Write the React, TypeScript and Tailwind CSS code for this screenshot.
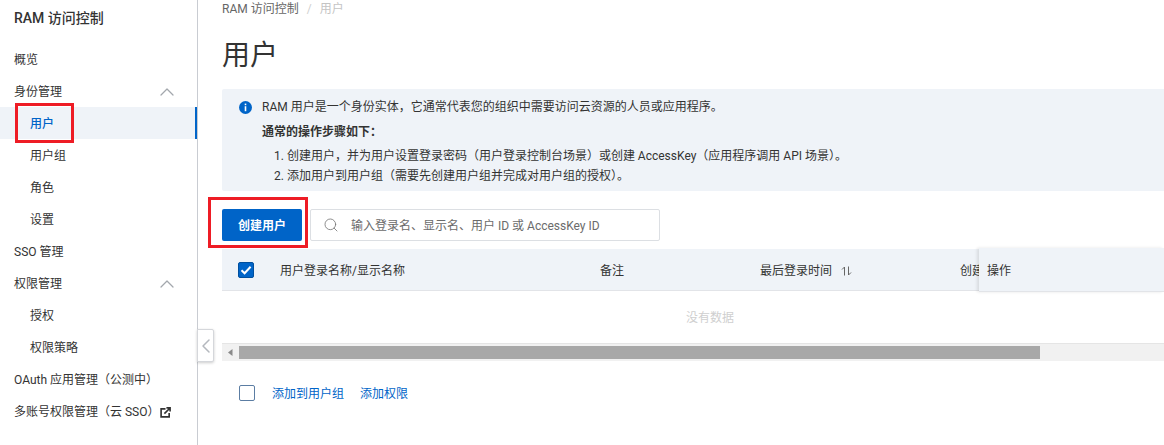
import { ChevronLeft, ChevronUp, Search } from 'lucide-react';

const FONT = "font-['Roboto','Noto_Sans_CJK_SC',sans-serif]";

const navItems = [
  { label: '概览' },
  { label: '身份管理', expandable: true },
  { label: '用户', sub: true, active: true },
  { label: '用户组', sub: true },
  { label: '角色', sub: true },
  { label: '设置', sub: true },
  { label: 'SSO 管理' },
  { label: '权限管理', expandable: true },
  { label: '授权', sub: true },
  { label: '权限策略', sub: true },
  { label: 'OAuth 应用管理（公测中）' },
  { label: '多账号权限管理（云 SSO）', external: true },
];

function ExternalIcon() {
  return (
    <svg width="11" height="11" viewBox="0 0 12 12" className="ml-[1px] text-[#333]" fill="none" stroke="currentColor">
      <path d="M6 2H1.2v8.8H10V6.5" strokeWidth="1.8" />
      <path d="M4.8 7.2 10.4 1.6M7 1h4v4" strokeWidth="1.8" />
    </svg>
  );
}

function Sidebar() {
  return (
    <aside className="relative w-[198px] h-full shrink-0 border-r border-[#c9ccd2] bg-white">
      <div className="h-[43px] pt-[8px] pl-[14px] text-[14px] leading-[20px] font-medium text-[#333]">RAM 访问控制</div>
      <nav>
        {navItems.map((item) => (
          <div
            key={item.label}
            className={`flex items-center h-[32px] pt-[2px] text-[12px] ${item.sub ? 'pl-[30px]' : 'pl-[14px]'} ${
              item.active ? 'bg-[#eff3f8] text-[#0064c8] font-medium border-r-2 border-[#0064c8]' : 'text-[#333]'
            }`}
          >
            <span>{item.label}</span>
            {item.external && <ExternalIcon />}
            {item.expandable && <ChevronUp className="ml-auto mr-[18px] w-[24px] h-[24px] text-[#a3a7ad]" strokeWidth={1.25} />}
          </div>
        ))}
      </nav>
      <button className="absolute left-[197px] top-[329px] w-[17px] h-[33px] flex items-center justify-center bg-white border border-[#d5d7db] rounded-r-[2px] shadow-[0_1px_3px_rgba(0,0,0,0.2)]">
        <ChevronLeft className="shrink-0 w-[24px] h-[24px] text-[#b4b8be]" strokeWidth={1.5} />
      </button>
    </aside>
  );
}

function InfoIcon() {
  return (
    <svg width="13" height="13" viewBox="0 0 13 13" className="shrink-0 mt-[4px]">
      <circle cx="6.5" cy="6.5" r="6.5" fill="#0064c8" />
      <rect x="5.7" y="2.6" width="1.6" height="1.6" fill="#fff" />
      <rect x="5.7" y="5.2" width="1.6" height="5" fill="#fff" />
    </svg>
  );
}

function SortIcon() {
  return (
    <svg width="11" height="10" viewBox="0 0 11 10" className="ml-[9px] text-[#666]" fill="none" stroke="currentColor">
      <path d="M3.5 9.5V1L1 3.5M7.5 0.5V9L10 6.5" strokeWidth="1" />
    </svg>
  );
}

function Checkbox({ checked }: { checked?: boolean }) {
  if (checked) {
    return (
      <span className="flex w-[16px] h-[16px] items-center justify-center rounded-[2px] bg-[#0064c8] border border-[#004f9e]">
        <svg width="12" height="12" viewBox="0 0 12 12" fill="none" stroke="#fff" strokeWidth="2">
          <path d="M1.5 6.2 4.6 9.2 10.6 2.8" />
        </svg>
      </span>
    );
  }
  return <span className="block w-[16px] h-[16px] rounded-[2px] bg-white border border-[#5b7da3]" />;
}

function InfoBox() {
  return (
    <div className="flex h-[102px] mt-[15px] pt-[8px] pl-[17px] bg-[#eff3f8] rounded-l-[2px] text-[12px] text-[#333]">
      <InfoIcon />
      <div className="ml-[10px]">
        <p className="leading-[20px]">RAM 用户是一个身份实体，它通常代表您的组织中需要访问云资源的人员或应用程序。</p>
        <p className="leading-[20px] mt-[5px] font-bold">通常的操作步骤如下：</p>
        <ol className="mt-[4px] pl-[12px]">
          <li className="leading-[20px]">1. 创建用户，并为用户设置登录密码（用户登录控制台场景）或创建 AccessKey（应用程序调用 API 场景）。</li>
          <li className="leading-[20px]">2. 添加用户到用户组（需要先创建用户组并完成对用户组的授权）。</li>
        </ol>
      </div>
    </div>
  );
}

function Toolbar() {
  return (
    <div className="flex items-center gap-[8px] mt-[18px]">
      <button className="w-[80px] h-[32px] pt-[2px] rounded-[2px] bg-[#0064c8] text-white text-[12px] font-bold">创建用户</button>
      <div className="flex items-center w-[350px] h-[32px] pl-[12px] bg-white border border-[#dcdfe3] rounded-[2px]">
        <Search className="w-[16px] h-[16px] text-[#777]" strokeWidth={1.25} />
        <span className="ml-[12px] pt-[2px] text-[12px] text-[#6b6b6b]">输入登录名、显示名、用户 ID 或 AccessKey ID</span>
      </div>
    </div>
  );
}

function UserTable() {
  return (
    <div className="relative mt-[8px]">
      <div className="flex items-center h-[42px] bg-[#eff3f8] border-b border-[#e2e4e8] text-[12px] text-[#333] whitespace-nowrap overflow-hidden">
        <div className="w-[58px] pl-[16px] shrink-0">
          <Checkbox checked />
        </div>
        <div className="w-[320px] pt-[2px] shrink-0">用户登录名称/显示名称</div>
        <div className="w-[160px] pt-[2px] shrink-0">备注</div>
        <div className="flex items-center w-[200px] pt-[2px] shrink-0">
          最后登录时间
          <SortIcon />
        </div>
        <div className="pt-[2px] shrink-0">创建时间</div>
      </div>
      <div className="absolute left-[757px] right-0 -top-[1px] h-[44px] flex items-center pl-[8px] pt-[2px] bg-[#eff3f8] border-b border-[#e2e4e8] text-[12px] text-[#333] shadow-[-2px_0_3px_rgba(0,0,0,0.1)]">
        操作
      </div>
      <div className="flex items-center justify-center h-[53px] pl-[34px] pt-[2px] border-b border-[#e5e5e5] text-[12px] text-[#cfcfcf]">
        没有数据
      </div>
      <div className="flex items-center h-[17px] bg-[#f1f1f1]">
        <svg width="17" height="13" viewBox="0 0 17 13" className="shrink-0">
          <path d="M6 6.5 10.5 3v7z" fill="#8a8a8a" />
        </svg>
        <div className="w-[801px] h-[13px] bg-[#a8a8a8]" />
      </div>
    </div>
  );
}

export default function App() {
  return (
    <div className={`relative flex w-[1164px] h-[445px] overflow-hidden bg-white ${FONT}`}>
      <Sidebar />
      <main className="flex-1 min-w-0 pl-[24px]">
        <div className="flex items-center h-[18px] text-[12px] leading-[16px]">
          <span className="text-[#666]">RAM 访问控制</span>
          <span className="mx-[8px] text-[#d0d0d0]">/</span>
          <span className="text-[#c4c4c4]">用户</span>
        </div>
        <h1 className="mt-[19px] h-[37px] text-[28px] leading-[38px] font-normal text-[#333]">用户</h1>
        <InfoBox />
        <Toolbar />
        <UserTable />
        <div className="flex items-center mt-[22px] pl-[17px] text-[12px] text-[#0064c8]">
          <Checkbox />
          <a className="ml-[17px] pt-[2px]">添加到用户组</a>
          <a className="ml-[16px] pt-[2px]">添加权限</a>
        </div>
      </main>
      {/* Annotation boxes painted on the screenshot */}
      <div className="absolute left-[15px] top-[103px] w-[59px] h-[40px] border-[3px] border-[#ee1c25]" />
      <div className="absolute left-[208px] top-[197px] w-[100px] h-[51px] border-[3px] border-[#ee1c25]" />
    </div>
  );
}
